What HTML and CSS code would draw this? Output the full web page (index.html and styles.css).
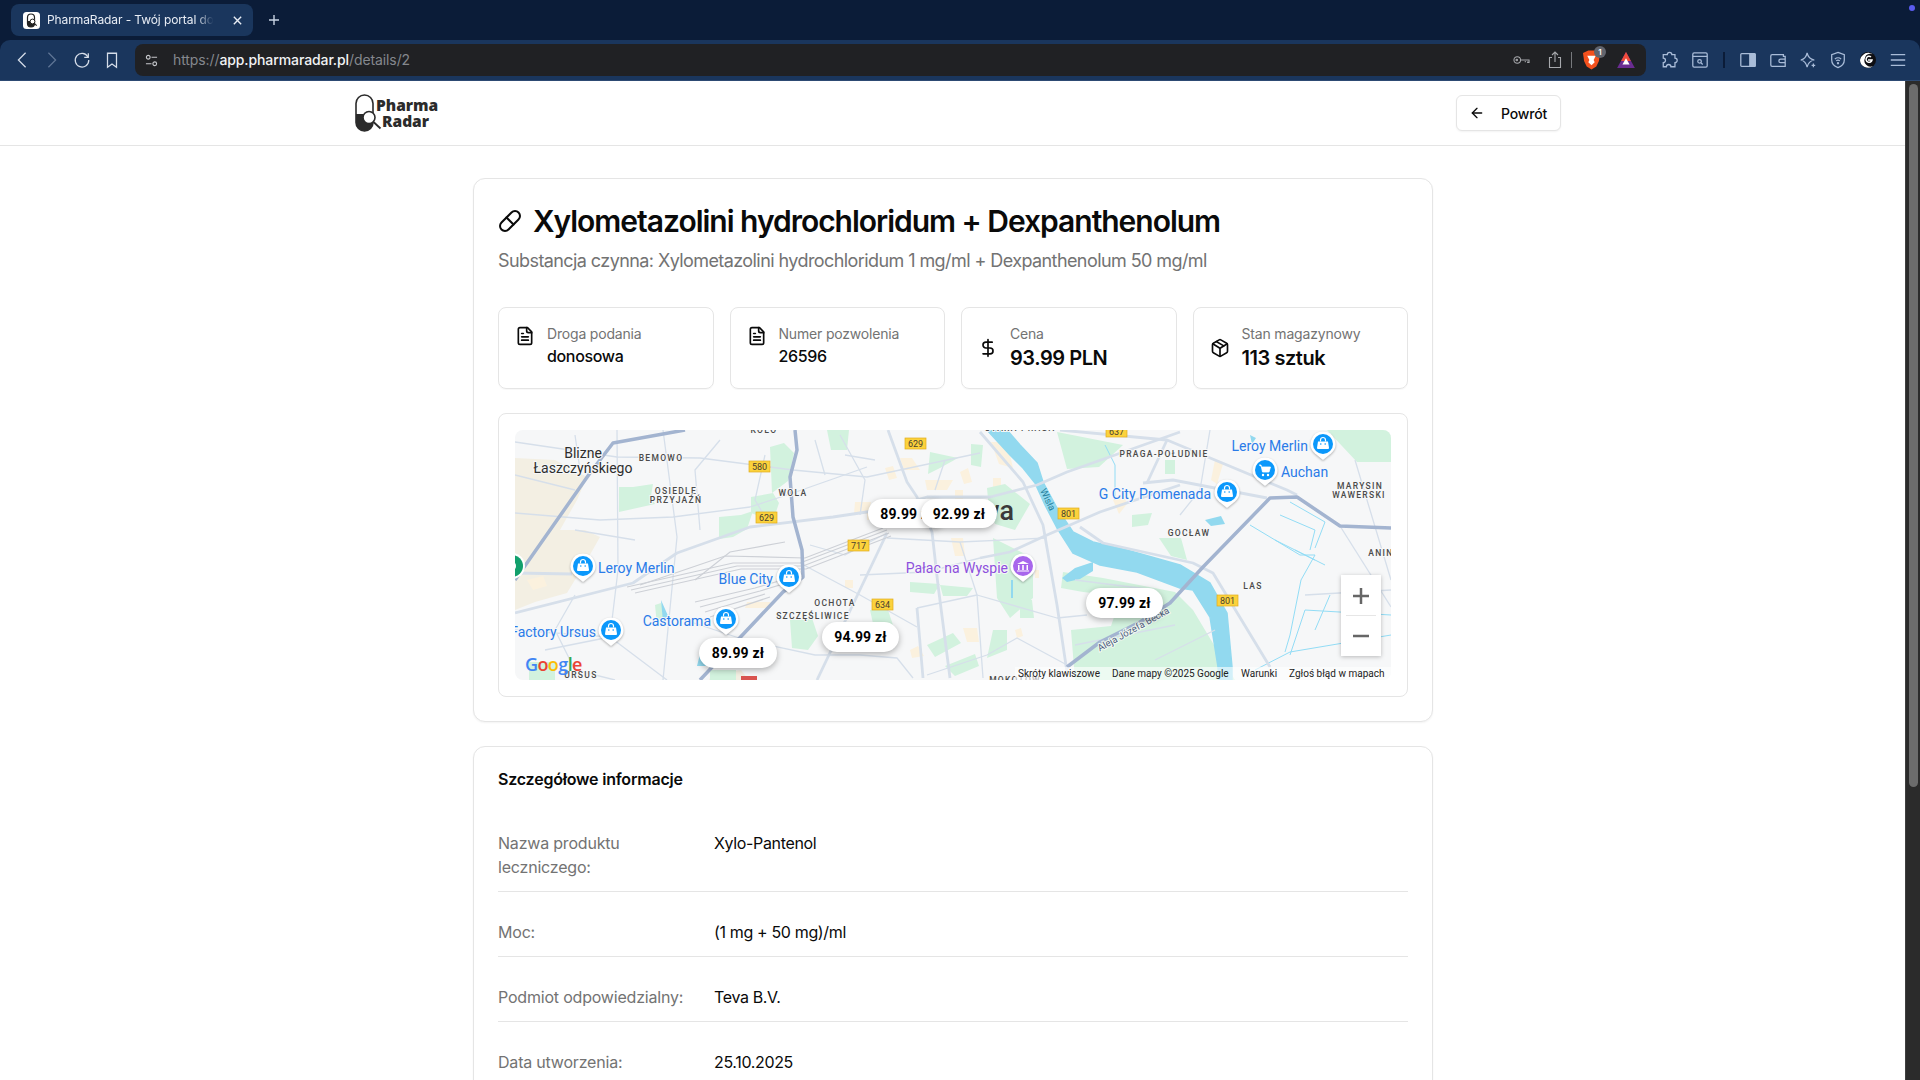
FILE: index.html
```html
<!DOCTYPE html>
<html lang="pl">
<head>
    <meta charset="UTF-8">
    <meta name="viewport" content="width=device-width, initial-scale=1.0">
    <title>PharmaRadar</title>
    <link rel="stylesheet" href="styles.css">
</head>
<body>

<!-- browser chrome -->
<div class="tabstrip">
    <div class="tab">
        <svg class="favicon" viewBox="0 0 17 17"><rect width="17" height="17" rx="3.5" fill="#fff"/><rect x="4.5" y="2" width="7" height="13" rx="3.5" fill="none" stroke="#222" stroke-width="1.2"/><path d="M4.5 9h7v2.5a3.5 3.5 0 0 1-7 0z" fill="#222"/><circle cx="9.5" cy="9.5" r="2.4" fill="#fff" stroke="#222"/><path d="m11.3 11.3 2.4 2.4" stroke="#222" stroke-width="1.1"/></svg>
        <span class="tab-title">PharmaRadar - Twój portal do leków</span>
        <svg class="tab-close" viewBox="0 0 12 12"><path d="m2 2 8 8M10 2l-8 8"/></svg>
    </div>
    <svg class="tab-new" viewBox="0 0 12 12"><path d="M6 1v10M1 6h10"/></svg>
    <span class="notify-dot"></span>
</div>

<div class="toolbar">
    <div class="tool"><svg viewBox="0 0 20 20"><path d="M14 2 6 10l8 8"/></svg></div>
    <div class="tool tool-dim"><svg viewBox="0 0 20 20"><path d="m6 2 8 8-8 8"/></svg></div>
    <div class="tool"><svg viewBox="0 0 20 20"><path d="M16.5 6.5A7.5 7.5 0 1 0 17.5 10"/><path d="M17 2.5v4.5h-4.5" /></svg></div>
    <div class="tool"><svg viewBox="0 0 20 20"><path d="M5 2.500h10v15.500l-5-3.500-5 3.500z"/></svg></div>

    <div class="addressbar">
        <svg class="site-icon" viewBox="0 0 14 14"><circle cx="3.500" cy="3.500" r="2"/><path d="M7 3.500h6M1 10.500h6"/><circle cx="10.500" cy="10.500" r="2"/></svg>
        <span class="url"><span class="url-dim">https://</span>app.pharmaradar.pl<span class="url-dim">/details/2</span></span>
        <div class="addr-right">
            <svg class="addr-icon addr-key" viewBox="0 0 18 12"><circle cx="4.500" cy="6" r="3.500"/><circle cx="4" cy="6" r=".8"/><path d="M8 6h9v2.500h-1.500V7.500M13 7v1.500"/></svg>
            <svg class="addr-icon addr-share" viewBox="0 0 14 18"><path d="M4 6.500H1.500v10h11v-10H10M7 11V1.500M4 4l3-3 3 3"/></svg>
            <span class="addr-sep"></span>
            <div class="brave">
                <svg viewBox="0 0 16 18"><path d="M2 1.500 5 0h6l3 1.500 2 1-1 7.500-2.500 5L8 18l-4.500-3L1 10 0 2.500z" fill="#f4511e"/><path d="M4 5h8l-2 4 1 2-3 3-3-3 1-2z" fill="#fff"/></svg>
                <span class="brave-badge">1</span>
            </div>
            <svg class="addr-bat" viewBox="0 0 20 18"><path d="M10 0 20 18H0z" fill="#6a2c91"/><path d="M10 0 15.500 10H4.500z" fill="#ef4b3a"/><path d="M10 7 14 14H6z" fill="#fff"/></svg>
        </div>
    </div>

    <div class="tool-right">
        <div class="tool tool-blue"><svg viewBox="0 0 20 20"><path d="M7 4a2.500 2.500 0 0 1 5 0h3.500v4a2.500 2.500 0 0 1 0 5v4.500H11a2.500 2.500 0 0 0-5 0H2.500V13a2.500 2.500 0 0 0 0-5V4z"/></svg></div>
        <div class="tool tool-blue"><svg viewBox="0 0 20 20"><rect x="2" y="2" width="16" height="16" rx="1.500"/><path d="M2 6h16"/><circle cx="9.500" cy="11.500" r="2"/><path d="m11 13 2 2"/></svg></div>
        <span class="tool-sep"></span>
        <div class="tool tool-blue"><svg viewBox="0 0 20 20"><rect x="2" y="3" width="16" height="14" rx="1"/><path d="M12 3h5a1 1 0 0 1 1 1v12a1 1 0 0 1-1 1h-5z" class="fill-blue"/></svg></div>
        <div class="tool tool-blue"><svg viewBox="0 0 20 20"><path d="M16 6V4H3.500A1.500 1.500 0 0 0 2 5.500v10A1.500 1.500 0 0 0 3.500 17H18V6zM18 9h-5a2 2 0 0 0 0 4h5"/></svg></div>
        <div class="tool tool-blue"><svg viewBox="0 0 20 20"><path d="M9 2c1 5 3 7 8 8-5 1-7 3-8 8-1-5-3-7-7-8 4-1 6-3 7-8zM16 14v4M14 16h4"/></svg></div>
        <div class="tool tool-blue"><svg viewBox="0 0 20 20"><path d="M10 1.500 17 4v6c0 4-3 7-7 8.500C6 17 3 14 3 10V4z"/><path d="M6.500 9a5 5 0 0 1 7 0M8 11a3 3 0 0 1 4 0"/><circle cx="10" cy="13.500" r=".6"/></svg></div>
        <div class="tool"><svg class="leo" viewBox="0 0 20 20"><circle cx="10" cy="10" r="8" fill="#0e0e12"/><path d="M2 10a8 8 0 0 0 13 6 6 6 0 0 1-8-8 5 5 0 0 1 9-2 7 7 0 0 0-11-1 7 7 0 0 0-3 5z" fill="#fff"/><path d="M10 10h4a3 3 0 1 1-1-3" fill="none" stroke="#fff" stroke-width="1.500"/></svg></div>
        <div class="tool tool-blue"><svg viewBox="0 0 20 20"><path d="M2 4h16M2 10h16M2 16h16"/></svg></div>
    </div>
</div>

<div class="window">
    <div class="page">
        <header class="site-header">
            <div class="logo">
                <svg class="logo-mark" viewBox="0 0 28 38"><rect x="1" y="1" width="17" height="36" rx="8.500" fill="#fff" stroke="#2b2b2b" stroke-width="1.600"/><path d="M1 20h17v8.500a8.500 8.500 0 0 1-17 0z" fill="#2b2b2b"/><circle cx="14" cy="23.500" r="6" fill="#fff" stroke="#2b2b2b" stroke-width="1.600"/><path d="m18.500 28 7 6.500" stroke="#2b2b2b" stroke-width="1.800"/></svg>
                <div class="logo-text"><span>Pharma</span><span class="logo-radar">Radar</span></div>
            </div>
            <button class="back-btn">
                <svg class="ic ic-16" viewBox="0 0 24 24"><path d="m12 19-7-7 7-7"/><path d="M19 12H5"/></svg>
                Powrót
            </button>
        </header>

        <main class="content">
            <section class="card">
                <h1 class="drug-title">
                    <svg class="ic ic-24" viewBox="0 0 24 24"><path d="m10.500 20.500 10-10a4.950 4.950 0 1 0-7-7l-10 10a4.950 4.950 0 1 0 7 7Z"/><path d="m8.500 8.500 7 7"/></svg>
                    Xylometazolini hydrochloridum + Dexpanthenolum
                </h1>
                <p class="drug-sub">Substancja czynna: Xylometazolini hydrochloridum 1 mg/ml + Dexpanthenolum 50 mg/ml</p>

                <div class="stats">
                    <div class="stat stat-top">
                        <svg class="ic ic-20" viewBox="0 0 24 24"><path d="M15 2H6a2 2 0 0 0-2 2v16a2 2 0 0 0 2 2h12a2 2 0 0 0 2-2V7Z"/><path d="M14 2v4a2 2 0 0 0 2 2h4"/><path d="M10 9H8"/><path d="M16 13H8"/><path d="M16 17H8"/></svg>
                        <div><div class="stat-label">Droga podania</div><div class="stat-value">donosowa</div></div>
                    </div>
                    <div class="stat stat-top">
                        <svg class="ic ic-20" viewBox="0 0 24 24"><path d="M15 2H6a2 2 0 0 0-2 2v16a2 2 0 0 0 2 2h12a2 2 0 0 0 2-2V7Z"/><path d="M14 2v4a2 2 0 0 0 2 2h4"/><path d="M10 9H8"/><path d="M16 13H8"/><path d="M16 17H8"/></svg>
                        <div><div class="stat-label">Numer pozwolenia</div><div class="stat-value">26596</div></div>
                    </div>
                    <div class="stat">
                        <svg class="ic ic-20" viewBox="0 0 24 24"><line x1="12" x2="12" y1="2" y2="22"/><path d="M17 5H9.500a3.500 3.500 0 0 0 0 7h5a3.500 3.500 0 0 1 0 7H6"/></svg>
                        <div><div class="stat-label">Cena</div><div class="stat-value stat-big">93.99 PLN</div></div>
                    </div>
                    <div class="stat">
                        <svg class="ic ic-20" viewBox="0 0 24 24"><path d="M11 21.730a2 2 0 0 0 2 0l7-4A2 2 0 0 0 21 16V8a2 2 0 0 0-1-1.730l-7-4a2 2 0 0 0-2 0l-7 4A2 2 0 0 0 3 8v8a2 2 0 0 0 1 1.730z"/><path d="M12 22V12"/><path d="m3.300 7 7.703 4.734a2 2 0 0 0 1.994 0L20.700 7"/><path d="m7.500 4.270 9 5.150"/></svg>
                        <div><div class="stat-label">Stan magazynowy</div><div class="stat-value stat-big">113 sztuk</div></div>
                    </div>
                </div>

                <div class="map-card">
                    <svg class="map" viewBox="0 0 876 250">
                        <defs>
                            <g id="pin-base">
                                <path class="pin-shell" d="M0-12.500a12.500 12.500 0 0 1 8 22L0 16l-8-6.500a12.500 12.500 0 0 1 8-22z"/>
                                <circle r="10" fill="currentColor"/>
                            </g>
                            <g id="pin-bag">
                                <use href="#pin-base"/>
                                <path d="M-5-2.500h10l1 6.500a1 1 0 0 1-1 1H-5a1 1 0 0 1-1-1z" fill="#fff"/>
                                <path d="M-2.500-2.500v-1.500a2.500 2.500 0 0 1 5 0v1.500" fill="none" stroke="#fff" stroke-width="1.200"/>
                                <circle cx="-2.200" cy="0" r=".8" fill="currentColor"/><circle cx="2.200" cy="0" r=".8" fill="currentColor"/>
                            </g>
                        </defs>

                        <rect width="876" height="250" fill="#f6f7f8"/>

                        <!-- land use -->
                        <path class="m-tan" d="M0 28 40 30 72 47 62 70 45 100 70 100 85 107 72 130 52 163 20 172 0 180z"/>
                        <path class="m-tan" d="M196 245l30-5 8 10h-40z"/>
                        <g class="m-peach">
                            <path d="M340 72h16l-3 12h-14zM385 28h12l8 12h-16zM410 50h28l-6 10h-20zM370 38l8-2 4 12-8 2zM440 60h8v16h-8zM436 108h12l2 18h-10zM476 12h16l6 26-14-4zM478 48h8v14h-8zM448 198h14l2 14h-12zM500 200l6-2 2 8-6 2zM352 80h8v10h-8zM330 150h8v8h-8zM520 140h4v8h-4zM232 172h24l-4 6h-22zM12 150l16-4 4 10-14 4z"/>
                            <path d="M608 62l-10 8 6 14 8-10zM700 30l8 4-6 20-6-4zM445 42l8-4 4 14-8 2zM395 220l8-4 6 10-12 2z"/>
                        </g>
                        <g class="m-green">
                            <path d="M104 57h14l20-3-2 12 4 8-36 8zM204 87l22-2 12-4-6 18-14 8-14 2zM236 67l22-4 6 10-6 18-22-8zM255 17l14-4 10 10-6 28-16 12zM312 0h22l-2 20h-16zM195 240h26v10h-26zM140 175l6-2 6 16-10 6zM275 190l22-2 6 18-10 14-16-2zM355 180h18l6 18h-20zM14 232h26v18H14zM415 22l28 6-18 10-12 6zM456 14l12 1-2 22-10-2zM395 152l30 2-6 10-24-2zM425 155l33 3-6 8h-24z"/>
                            <path d="M542 2l66 13-24 22-32 2zM644 108l22 0 6 22-16-4zM617 85l20-2-4 12-16 2zM812 0h64v32h-34zM650 30h10v14h-10zM472 58l18-4 25 20-15 26-20-6-6-14zM478 108l40 20v40l-23 20-13-20zM505 170l12 0 2 18-14 0z"/>
                            <path d="M548 142l40 6 72 14 18 18 42 70H560l-4-50 40-4 10-30-38-4-22-4zM478 200h14v20l-20 8zM412 215l26-12 8 10-26 14zM430 236l30-12 4 12-24 10z"/>
                        </g>

                        <!-- water -->
                        <path class="m-river" d="M472 0 495 25 508 38 520 53 530 75 542 98 558 123 585 135 622 142 665 158 678 160 695 187 703 237 704 250H717L717 237 712 183 695 153 665 135 612 120 578 112 558 102 542 78 528 52 522 33 505 15 492 0z"/>
                        <path class="m-lake" d="M547 148 560 138 578 132 578 141 565 149 552 152zM146 170l8 18-6 4zM186 220l8 16-12 0zM310 205l10-2 4 16-8 2zM735 5l6 3-4 6zM496 150l2 0 0 18-2 0zM690 90l16-4 4 8-14 2z"/>
                        <g class="m-canal">
                            <path d="M735 95 785 125 800 125 786 150 775 205 770 222M765 85 800 100 795 120M775 72 810 92 800 118M780 120 810 135M760 110 800 130M590 15 600 35 600 70M775 225 790 180 876 185M740 240 775 222 876 205M800 200 815 165"/>
                        </g>

                        <!-- local streets -->
                        <g class="m-road">
                            <path d="M0 12 102 27 185 28 278 40 352 47 465 23"/>
                            <path d="M0 83 85 90 158 87 235 77 278 63 352 37"/>
                            <path class="m-wide" d="M0 183 118 153 162 123 235 97 318 87 365 80 412 67 475 67 522 55 552 42 665 2"/>
                            <path d="M148 0 162 107 148 250"/>
                            <path d="M102 0 103 140 95 207 152 250"/>
                            <path class="m-wide" d="M0 143 57 144"/>
                            <path class="m-wide" d="M372 103 302 250"/>
                            <path d="M372 108 445 112 532 108"/>
                            <path class="m-wide" d="M373 0 392 52 402 67 417 102 423 155 435 248"/>
                            <path d="M445 112 462 165 468 248"/>
                            <path d="M402 178 462 165 542 188 572 185"/>
                            <path class="m-wide" d="M402 178 408 248"/>
                            <path d="M345 145 412 142 465 128"/>
                            <path class="m-wide" d="M465 128 495 122 532 105 585 82 665 55"/>
                            <path class="m-wide" d="M465 2 508 52 528 95 542 175 552 242"/>
                            <path d="M345 225 382 228 398 248M412 245 472 225 502 208 552 235"/>
                            <path d="M285 133 345 165 402 197"/>
                            <path class="m-wide" d="M628 53 658 50 752 68"/>
                            <path class="m-wide" d="M565 97 588 113 678 133 698 143 755 237"/>
                            <path class="m-wide" d="M545 0 652 10 772 60 782 65"/>
                            <path class="m-wide" d="M652 10 632 53"/>
                            <path d="M825 96 876 177"/>
                            <path d="M325 5 350 50 345 85M205 10 180 40 185 100M250 25 240 70 255 95M295 115 330 125 372 103M60 165 40 200 60 240 100 250M0 200 95 207M170 190 230 210 300 225 345 225"/>
                            <path d="M665 85 685 60 695 0M840 30 870 130 876 150M640 230 700 200M790 165 876 160M560 215 660 195M60 5 65 40M0 45 60 60M120 110 60 100M330 25 360 30M300 10 310 45M420 60 430 30M30 220 95 207M560 150 640 160"/>
                        </g>

                        <!-- rail yard -->
                        <g class="m-rail">
                            <path d="M112 157 218 133 285 133 372 100"/>
                            <path d="M116 160 222 136 288 136 374 103"/>
                            <path d="M120 163 226 139 291 139 376 106"/>
                            <path d="M125 155 210 126 290 128 368 98"/>
                            <path d="M180 150 215 122 270 112"/>
                            <path d="M180 172 240 158 285 145"/>
                            <path d="M185 177 245 161 288 148"/>
                            <path d="M190 182 250 164"/>
                            <path d="M195 187 255 167"/>
                        </g>

                        <!-- expressways -->
                        <g class="m-highway">
                            <path d="M0 150 75 43 98 13 170 0"/>
                            <path d="M280 0 282 20 275 47 278 87 287 120 288 147 268 162 185 250"/>
                            <path d="M876 98 825 96 782 67 755 68 688 137 655 173 625 192 585 212 552 237"/>
                        </g>

                        <!-- road shields -->
                        <g class="m-shield"><rect x="234" y="31" width="21" height="11"/><text x="244.500" y="40">580</text></g>
                        <g class="m-shield"><rect x="241" y="82" width="21" height="11"/><text x="251.500" y="91">629</text></g>
                        <g class="m-shield"><rect x="390" y="8" width="21" height="11"/><text x="400.500" y="17">629</text></g>
                        <g class="m-shield"><rect x="333" y="110" width="21" height="11"/><text x="343.500" y="119">717</text></g>
                        <g class="m-shield"><rect x="357" y="169" width="21" height="11"/><text x="367.500" y="178">634</text></g>
                        <g class="m-shield"><rect x="591" y="-4" width="21" height="11"/><text x="601.500" y="5">637</text></g>
                        <g class="m-shield"><rect x="543" y="78" width="21" height="11"/><text x="553.500" y="87">801</text></g>
                        <g class="m-shield"><rect x="702" y="165" width="21" height="11"/><text x="712.500" y="174">801</text></g>

                        <!-- district labels -->
                        <text class="m-city" x="68" y="28">Blizne</text>
                        <text class="m-city" x="68" y="43">Łaszczyńskiego</text>
                        <text class="m-dist" x="146" y="31">BEMOWO</text>
                        <text class="m-dist" x="161" y="64">OSIEDLE</text>
                        <text class="m-dist" x="161" y="73">PRZYJAŹŃ</text>
                        <text class="m-dist" x="278" y="66">WOLA</text>
                        <text class="m-dist" x="249" y="3">KOŁO</text>
                        <text class="m-dist" x="320" y="176">OCHOTA</text>
                        <text class="m-dist" x="298" y="189">SZCZĘŚLIWICE</text>
                        <text class="m-dist" x="66" y="248">URSUS</text>
                        <text class="m-dist" x="649" y="27">PRAGA-POŁUDNIE</text>
                        <text class="m-dist" x="674" y="106">GOCŁAW</text>
                        <text class="m-dist" x="738" y="159">LAS</text>
                        <text class="m-dist" x="845" y="59">MARYSIN</text>
                        <text class="m-dist" x="844" y="68">WAWERSKI</text>
                        <text class="m-dist" x="866" y="126">ANIN</text>
                        <text class="m-dist" x="505" y="1">STARA PRAGA</text>
                        <text class="m-dist" x="500" y="253">MOKOTÓW</text>
                        <text class="m-big" x="499" y="90">Warszawa</text>
                        <text class="m-river-name" transform="translate(530 71) rotate(64)">Wisła</text>
                        <text class="m-street" transform="translate(620 202) rotate(-29)">Aleja Józefa Becka</text>

                        <!-- places -->
                        <circle class="pin-shell" cx="-3" cy="136" r="13"/>
                        <circle cx="-3" cy="136" r="11" fill="#12a06c"/>
                        <circle cx="-3" cy="136" r="4" fill="#fff"/>

                        <use class="pin-blue" href="#pin-bag" x="68" y="136"/>
                        <text class="m-place" x="83" y="143">Leroy Merlin</text>
                        <use class="pin-blue" href="#pin-bag" x="274" y="147"/>
                        <text class="m-place m-end" x="258" y="154">Blue City</text>
                        <use class="pin-blue" href="#pin-bag" x="211" y="189"/>
                        <text class="m-place m-end" x="196" y="196">Castorama</text>
                        <use class="pin-blue" href="#pin-bag" x="96" y="200"/>
                        <text class="m-place m-end" x="81" y="207">Factory Ursus</text>
                        <use class="pin-blue" href="#pin-bag" x="808" y="14"/>
                        <text class="m-place m-end" x="793" y="21">Leroy Merlin</text>
                        <use class="pin-blue" href="#pin-base" x="750" y="40"/>
                        <path d="M744 35h2l1.500 7h6.500l1.500-5h-9" fill="#fff" stroke="#fff" stroke-width=".8"/><circle cx="748" cy="45" r="1.200" fill="#fff"/><circle cx="753" cy="45" r="1.200" fill="#fff"/>
                        <text class="m-place" x="766" y="47">Auchan</text>
                        <use class="pin-blue" href="#pin-bag" x="712" y="62"/>
                        <text class="m-place m-end" x="696" y="69">G City Promenada</text>
                        <use class="pin-purple" href="#pin-base" x="508" y="136"/>
                        <path d="M502 134l6-3 6 3zM503 135h1.500v5H503zM507.200 135h1.600v5h-1.600zM511.500 135h1.500v5h-1.500zM502 140.500h12v1h-12z" fill="#fff"/>
                        <text class="m-place m-purple m-end" x="493" y="143">Pałac na Wyspie</text>

                        <!-- price bubbles -->
                        <rect class="m-mark" x="226" y="246" width="16" height="8"/>
                        <g class="price"><rect x="353" y="69" width="77" height="29" rx="14.500"/><text x="391.500" y="88.500">89.99 zł</text></g>
                        <g class="price"><rect x="406" y="69" width="76" height="29" rx="14.500"/><text x="444" y="88.500">92.99 zł</text></g>
                        <g class="price"><rect x="307" y="192" width="77" height="30" rx="15"/><text x="345.500" y="211.500">94.99 zł</text></g>
                        <g class="price"><rect x="184" y="208" width="78" height="30" rx="15"/><text x="223" y="227.500">89.99 zł</text></g>
                        <g class="price"><rect x="571" y="158" width="77" height="30" rx="15"/><text x="609.500" y="177.500">97.99 zł</text></g>

                        <!-- google furniture -->
                        <text class="m-google" x="10" y="241"><tspan fill="#4285f4">G</tspan><tspan fill="#ea4335">o</tspan><tspan fill="#fbbc05">o</tspan><tspan fill="#4285f4">g</tspan><tspan fill="#34a853">l</tspan><tspan fill="#ea4335">e</tspan></text>
                        <rect class="m-attr-bg" x="500" y="237" width="376" height="13"/>
                        <text class="m-attr" x="503" y="247">Skróty klawiszowe</text>
                        <text class="m-attr" x="597" y="247">Dane mapy ©2025 Google</text>
                        <text class="m-attr" x="726" y="247">Warunki</text>
                        <text class="m-attr" x="774" y="247">Zgłoś błąd w mapach</text>

                        <rect class="m-zoom" x="826" y="145" width="40" height="81"/>
                        <path class="m-zoom-line" d="M831 185.500h30"/>
                        <path class="m-zoom-sign" d="M846 158v16M838 166h16M838 206h16"/>
                    </svg>
                </div>
            </section>

            <section class="card card-details">
                <h2 class="details-title">Szczegółowe informacje</h2>
                <div class="row"><div class="row-label">Nazwa produktu leczniczego:</div><div class="row-value">Xylo-Pantenol</div></div>
                <div class="row"><div class="row-label">Moc:</div><div class="row-value">(1 mg + 50 mg)/ml</div></div>
                <div class="row"><div class="row-label">Podmiot odpowiedzialny:</div><div class="row-value">Teva B.V.</div></div>
                <div class="row"><div class="row-label">Data utworzenia:</div><div class="row-value">25.10.2025</div></div>
            </section>
        </main>
    </div>
    <div class="scrollbar"><div class="scroll-thumb"></div></div>
</div>

</body>
</html>
```

FILE: styles.css
```css
* {
    box-sizing: border-box;
}

html, body {
    margin: 0;
    padding: 0;
    height: 1080px;
    overflow: hidden;
}

body {
    font-family: Inter, "Liberation Sans", sans-serif;
    background-color: #0b1c38;
    color: #0a0a0a;
}

/* browser chrome */
.tabstrip {
    height: 40px;
    padding: 4px 0 4px 11px;
    display: flex;
    align-items: center;
    position: relative;
    background-color: #0b1c38;
}

.tab {
    width: 242px;
    height: 32px;
    padding: 0 10px 0 12px;
    display: flex;
    align-items: center;
    border-radius: 8px;
    background-color: #1a365d;
}

.favicon {
    width: 17px;
    height: 17px;
    flex: none;
}

.tab-title {
    margin: -2px 0 0 7px;
    flex: 1;
    overflow: hidden;
    white-space: nowrap;
    font-size: 12px;
    letter-spacing: -.1px;
    color: #e8edf5;
    -webkit-mask-image: linear-gradient(to right, #000 84%, transparent 94%);
    mask-image: linear-gradient(to right, #000 84%, transparent 94%);
}

.tab-close {
    width: 11px;
    height: 11px;
    margin-left: 8px;
    flex: none;
    fill: none;
    stroke: #e8edf5;
    stroke-width: 1.5;
}

.tab-new {
    width: 12px;
    height: 12px;
    margin-left: 15px;
    fill: none;
    stroke: #c9d3e3;
    stroke-width: 1.4;
}

.notify-dot {
    position: absolute;
    top: 5px;
    right: 5px;
    width: 6px;
    height: 6px;
    border-radius: 50%;
    background-color: #5b5cf0;
}

.toolbar {
    height: 41px;
    padding: 4px 7px 4px 7px;
    display: flex;
    align-items: center;
    border-radius: 10px 10px 0 0;
    background-color: #1a365d;
    border-bottom: 1px solid #2d4a73;
}

.tool {
    width: 30px;
    height: 32px;
    flex: none;
    display: flex;
    align-items: center;
    justify-content: center;
}

.tool svg {
    width: 18px;
    height: 18px;
    fill: none;
    stroke: #d5dde9;
    stroke-width: 1.4;
}

.tool-dim svg {
    stroke: #5f7595;
}

.tool-blue svg {
    stroke: #a9bcd8;
}

.tool svg.leo {
    stroke: none;
    width: 20px;
    height: 20px;
}

.fill-blue {
    fill: #a9bcd8;
}

.addressbar {
    margin-left: 8px;
    flex: 1;
    height: 32px;
    padding: 0 0 0 10px;
    display: flex;
    align-items: center;
    border-radius: 8px;
    background-color: #202124;
}

.site-icon {
    width: 13px;
    height: 13px;
    fill: none;
    stroke: #c6c8cc;
    stroke-width: 1.2;
}

.url {
    margin: -2px 0 0 15px;
    font-size: 14px;
    font-weight: 500;
    letter-spacing: -.1px;
    color: #f1f2f4;
}

.url-dim {
    font-weight: 400;
    color: #85888e;
}

.addr-right {
    margin-left: auto;
    display: flex;
    align-items: center;
}

.addr-icon {
    fill: none;
    stroke: #a7a9ad;
    stroke-width: 1.1;
}

.addr-key {
    width: 17px;
    height: 12px;
}

.addr-share {
    width: 14px;
    height: 18px;
    margin-left: 18px;
}

.addr-sep {
    width: 1px;
    height: 16px;
    margin: 0 11px 0 9px;
    background-color: #77797d;
}

.brave {
    width: 17px;
    height: 20px;
    position: relative;
}

.brave svg {
    display: block;
    width: 17px;
    height: 20px;
}

.brave-badge {
    position: absolute;
    top: -4px;
    left: 11px;
    width: 12px;
    height: 12px;
    border-radius: 50%;
    background-color: #62656e;
    color: #fff;
    font-size: 8px;
    font-weight: 600;
    line-height: 12px;
    text-align: center;
}

.addr-bat {
    width: 18px;
    height: 16px;
    margin: 0 11px 0 17px;
}

.tool-right {
    margin-left: 9px;
    display: flex;
    align-items: center;
}

.tool-sep {
    width: 2px;
    height: 16px;
    margin: 0 8px 0 8px;
    background-color: #0b1c38;
}

/* page */
.window {
    height: 999px;
    display: flex;
    background-color: #fff;
}

.page {
    flex: 1;
    min-width: 0;
}

.scrollbar {
    width: 15px;
    flex: none;
    padding: 3px 2px 0 3px;
    background-color: #2b2b2b;
    border-left: 1px solid #3f3f3f;
}

.scroll-thumb {
    height: 703px;
    border-radius: 5px;
    background-color: #6c6c6c;
}

.site-header {
    height: 65px;
    padding: 0 344px 0 355px;
    display: flex;
    align-items: center;
    justify-content: space-between;
    background-color: #fff;
    border-bottom: 1px solid #e5e5e5;
}

.logo {
    display: flex;
    align-items: center;
}

.logo-mark {
    width: 28px;
    height: 38px;
    margin-right: -7px;
}

.logo-text {
    display: flex;
    flex-direction: column;
    font-family: "Open Sans", sans-serif;
    font-size: 15.500px;
    font-weight: 800;
    line-height: 16px;
    color: #2b2b2b;
}

.logo-radar {
    margin-left: 6px;
}

.back-btn {
    width: 105px;
    height: 36px;
    padding: 0 13px 0 12px;
    display: flex;
    align-items: center;
    justify-content: space-between;
    border: 1px solid #e5e5e5;
    border-radius: 6px;
    background-color: #fff;
    box-shadow: 0 1px 2px rgba(0, 0, 0, .05);
    font-family: inherit;
    font-size: 14px;
    font-weight: 500;
    letter-spacing: -.2px;
    color: #0a0a0a;
}

.ic {
    flex: none;
    fill: none;
    stroke: currentColor;
    stroke-width: 2;
    stroke-linecap: round;
    stroke-linejoin: round;
}

.ic-16 {
    width: 16px;
    height: 16px;
}

.ic-20 {
    width: 20px;
    height: 20px;
}

.ic-24 {
    width: 24px;
    height: 24px;
}

.content {
    padding: 32px 0 0 0;
    width: 960px;
    margin-left: 473px;
    display: flex;
    flex-direction: column;
    gap: 24px;
}

.card {
    padding: 24px;
    border: 1px solid #e5e5e5;
    border-radius: 12px;
    background-color: #fff;
    box-shadow: 0 1px 2px rgba(0, 0, 0, .05);
}

.drug-title {
    margin: 0;
    display: flex;
    align-items: center;
    gap: 11px;
    font-size: 30px;
    font-weight: 600;
    line-height: 36px;
    letter-spacing: -1.020px;
}

.drug-sub {
    margin: 8px 0 0 0;
    font-size: 18px;
    line-height: 28px;
    letter-spacing: -.58px;
    color: #737373;
}

.stats {
    margin-top: 32px;
    display: grid;
    grid-template-columns: repeat(4, 1fr);
    gap: 16px;
}

.stat {
    height: 82px;
    padding: 16px;
    display: flex;
    align-items: center;
    gap: 12px;
    border: 1px solid #e5e5e5;
    border-radius: 8px;
    box-shadow: 0 1px 1px rgba(0, 0, 0, .03);
}

.stat-top {
    align-items: flex-start;
}

.stat-top .ic {
    margin-top: 2px;
}

.stat-label {
    font-size: 14px;
    line-height: 20px;
    letter-spacing: -.18px;
    color: #737373;
}

.stat-value {
    font-size: 16px;
    font-weight: 500;
    line-height: 24px;
    letter-spacing: -.35px;
}

.stat-big {
    font-size: 20px;
    font-weight: 600;
    line-height: 28px;
    letter-spacing: -.45px;
}

.map-card {
    margin-top: 24px;
    padding: 16px;
    border: 1px solid #e5e5e5;
    border-radius: 8px;
}

.map {
    display: block;
    width: 876px;
    height: 250px;
    border-radius: 8px;
    font-family: Roboto, sans-serif;
}

/* map layers */
.m-tan { fill: #f3efe3; }
.m-peach { fill: #fbf1de; }
.m-green { fill: #d2f2de; }
.m-lake { fill: #92d9ef; }

.m-river {
    fill: #92d9ef;
    stroke: #92d9ef;
    stroke-width: 1.500;
    stroke-linejoin: round;
}

.m-canal {
    fill: none;
    stroke: #92dcf5;
    stroke-width: 1;
}

.m-road {
    fill: none;
    stroke: #d6dfea;
    stroke-width: 1.300;
    stroke-linejoin: round;
}

.m-road .m-wide {
    stroke-width: 2.800;
}

.m-rail {
    fill: none;
    stroke: #cdd0d6;
    stroke-width: 1.200;
}

.m-highway {
    fill: none;
    stroke: #a3b4d0;
    stroke-width: 3.500;
    stroke-linejoin: round;
}

.m-shield rect {
    fill: #fbd23c;
    stroke: #e2ac1d;
    stroke-width: .7;
}

.m-shield text {
    font-size: 9px;
    fill: #4a4030;
    text-anchor: middle;
}

.m-city {
    font-size: 14px;
    fill: #2e2e2e;
    text-anchor: middle;
    paint-order: stroke;
    stroke: #f6f7f8;
    stroke-width: 2;
}

.m-dist {
    font-size: 8.500px;
    font-weight: 500;
    letter-spacing: 1.300px;
    fill: #4a4a4a;
    text-anchor: middle;
    paint-order: stroke;
    stroke: #f6f7f8;
    stroke-width: 2;
}

.m-big {
    font-size: 27px;
    font-weight: 500;
    fill: #3a3a3a;
    text-anchor: end;
}

.m-river-name {
    font-size: 9.500px;
    fill: #257f9c;
    text-anchor: middle;
}

.m-street {
    font-size: 9.500px;
    fill: #4d5f80;
    text-anchor: middle;
    paint-order: stroke;
    stroke: #f2f8f2;
    stroke-width: 2;
}

.m-place {
    font-size: 14px;
    fill: #2a7be8;
    paint-order: stroke;
    stroke: #f6f7f8;
    stroke-width: 2;
}

.m-end {
    text-anchor: end;
}

.m-purple {
    fill: #8d4fdc;
}

.pin-shell {
    fill: #fff;
}

.pin-blue {
    color: #0b98fb;
    filter: drop-shadow(0 1px 1px rgba(0, 0, 0, .3));
}

.pin-purple {
    color: #a867ec;
    filter: drop-shadow(0 1px 1px rgba(0, 0, 0, .3));
}

.m-mark {
    fill: #d9534f;
}

.price rect {
    fill: #fff;
    filter: drop-shadow(0 2px 3px rgba(0, 0, 0, .3));
}

.price text {
    font-size: 14px;
    font-weight: 700;
    letter-spacing: .2px;
    fill: #000;
    text-anchor: middle;
}

.m-google {
    font-family: "Open Sans", sans-serif;
    font-size: 18px;
    font-weight: 600;
    letter-spacing: -.6px;
}

.m-attr-bg {
    fill: rgba(255, 255, 255, .6);
}

.m-attr {
    font-size: 10px;
    fill: #222;
}

.m-zoom {
    fill: #fff;
    filter: drop-shadow(0 1px 2px rgba(0, 0, 0, .25));
}

.m-zoom-line {
    stroke: #e6e6e6;
    fill: none;
}

.m-zoom-sign {
    stroke: #666;
    stroke-width: 2.500;
    fill: none;
}

/* details */
.card-details {
    padding-bottom: 40px;
}

.details-title {
    margin: 0;
    font-size: 16px;
    font-weight: 600;
    line-height: 16px;
    letter-spacing: -.2px;
}

.row {
    padding: 28px 0 12px 0;
    display: grid;
    grid-template-columns: 200px 1fr;
    column-gap: 16px;
    border-bottom: 1px solid #e5e5e5;
    font-size: 16px;
    line-height: 24px;
}

.details-title + .row {
    padding-top: 44px;
}

.row-label {
    color: #737373;
    letter-spacing: -.2px;
}

.row-value {
    color: #0a0a0a;
    letter-spacing: -.35px;
}
```
